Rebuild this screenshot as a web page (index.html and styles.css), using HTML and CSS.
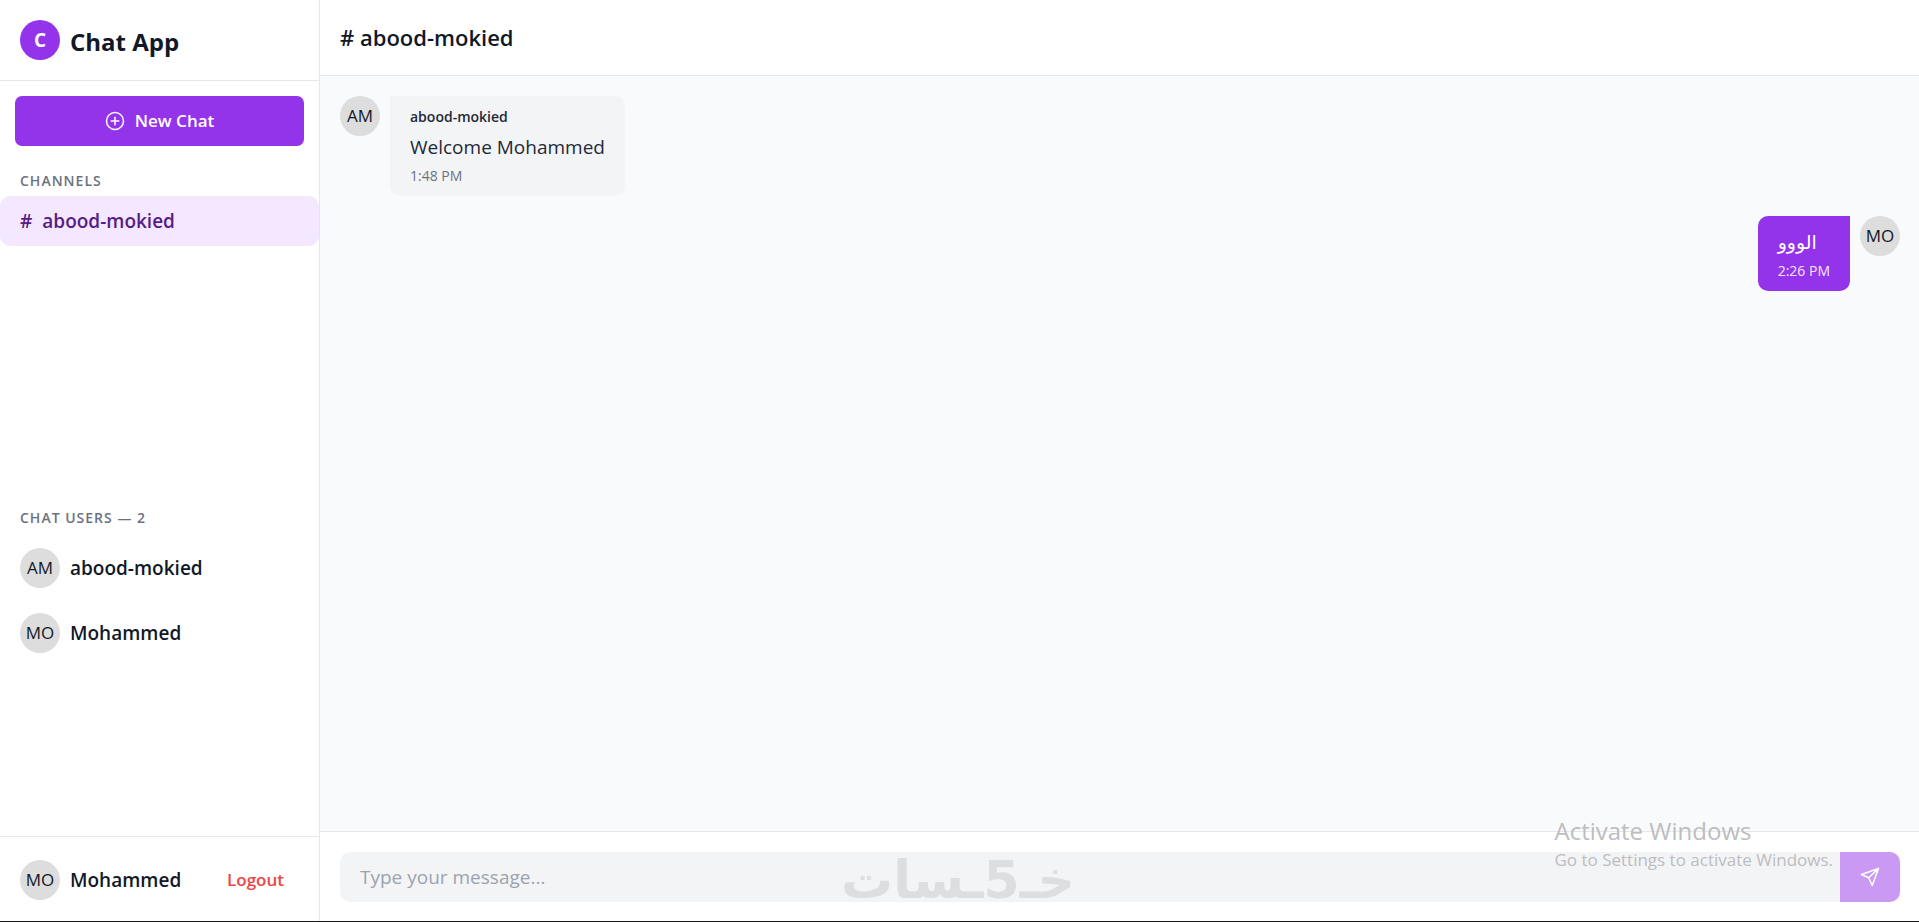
FILE: index.html
```
<!DOCTYPE html>
<html lang="en">
<head>
<meta charset="utf-8">
<title>Chat App</title>
<link rel="stylesheet" href="styles.css">
</head>
<body>
<div class="app">
  <aside class="sidebar">
    <header class="brand">
      <span class="brand-mark">C</span>
      <h1 class="brand-name">Chat App</h1>
    </header>
    <div class="sidebar-action">
      <button class="new-chat" type="button">
        <svg class="icon" viewBox="0 0 20 20" aria-hidden="true"><circle cx="10" cy="10" r="8.5"/><path d="M10 6.2v7.6M6.2 10h7.6"/></svg>
        New Chat
      </button>
    </div>
    <nav class="channels">
      <h2 class="section-title">Channels</h2>
      <a class="channel" href="#abood-mokied"><span>#</span><span>abood-mokied</span></a>
    </nav>
    <section class="users">
      <h2 class="section-title">Chat Users — 2</h2>
      <ul class="user-list">
        <li class="user"><span class="avatar">AM</span><span class="user-name">abood-mokied</span></li>
        <li class="user"><span class="avatar">MO</span><span class="user-name">Mohammed</span></li>
      </ul>
    </section>
    <footer class="account">
      <span class="avatar">MO</span>
      <span class="user-name">Mohammed</span>
      <button class="logout" type="button">Logout</button>
    </footer>
  </aside>
  <main class="chat">
    <header class="chat-header"><h2 class="chat-title"># abood-mokied</h2></header>
    <div class="messages">
      <article class="message">
        <span class="avatar">AM</span>
        <div class="bubble">
          <p class="author">abood-mokied</p>
          <p class="text">Welcome Mohammed</p>
          <time class="time">1:48 PM</time>
        </div>
      </article>
      <article class="message own">
        <span class="avatar">MO</span>
        <div class="bubble">
          <p class="text" lang="ar">الووو</p>
          <time class="time">2:26 PM</time>
        </div>
      </article>
    </div>
    <form class="composer">
      <input class="composer-input" type="text" placeholder="Type your message..." aria-label="Message">
      <button class="send" type="button" aria-label="Send">
        <svg class="icon" viewBox="0 0 20 20" aria-hidden="true"><path d="M18.5 1.5L1.5 7.5L8.7 10.8L12.2 18.5ZM18.5 1.5L8.7 10.8"/></svg>
      </button>
    </form>
  </main>
</div>
<div class="watermark" lang="ar" dir="rtl">خـ5ـسات</div>
<div class="activation">
  <p class="activation-title">Activate Windows</p>
  <p class="activation-note">Go to Settings to activate Windows.</p>
</div>
</body>
</html>
```
FILE: styles.css
```
* { box-sizing: border-box; }
body, h1, h2, p, ul { margin: 0; padding: 0; }
body {
  font-family: "Open Sans", "Noto Sans", "DejaVu Sans", sans-serif;
  font-size: 19px;
  line-height: 30px;
  color: #111827;
  background: #fff;
}
button, input { font: inherit; border: 0; }
button { cursor: pointer; }
.app {
  display: flex;
  height: 100vh;
  border-bottom: 1px solid #1c1c1c;
}
.icon {
  width: 20px;
  height: 20px;
  fill: none;
  stroke: currentColor;
  stroke-width: 1.5;
  stroke-linecap: round;
  stroke-linejoin: round;
}
.avatar, .brand-mark {
  display: flex;
  flex: none;
  align-items: center;
  justify-content: center;
  width: 40px;
  height: 40px;
  border-radius: 50%;
  background: #ddd;
  font-size: 17px;
}
.sidebar {
  display: flex;
  flex: none;
  flex-direction: column;
  width: 320px;
  border-right: 1px solid #e5e7eb;
}
.brand {
  display: flex;
  gap: 10px;
  padding: 20px 20px 16px;
  border-bottom: 1px solid #e5e7eb;
}
.brand-mark { background: #9333ea; color: #fff; font-size: 19px; font-weight: 700; }
.brand-name { font-size: 24px; line-height: 44px; font-weight: 700; }
.sidebar-action { padding: 15px; }
.new-chat {
  display: flex;
  align-items: center;
  justify-content: center;
  gap: 10px;
  width: 100%;
  height: 50px;
  border-radius: 7px;
  background: #9333ea;
  color: #fff;
  font-size: 17px;
  font-weight: 600;
}
.section-title {
  padding: 0 20px;
  font-size: 14px;
  line-height: 30px;
  font-weight: 600;
  letter-spacing: 1px;
  text-transform: uppercase;
  color: #6b7280;
}
.channels { flex: 1; padding-top: 5px; }
.channel {
  display: flex;
  gap: 10px;
  padding: 10px 20px;
  border-radius: 10px;
  background: #f3e8ff;
  color: #581c87;
  font-weight: 600;
  text-decoration: none;
}
.users { flex: 1; padding-top: 3px; }
.user-list { display: grid; gap: 25px; padding: 15px 20px; list-style: none; }
.user, .account { display: flex; align-items: center; gap: 10px; }
.user-name { font-weight: 600; }
.account { padding: 23px 20px 21px; border-top: 1px solid #e5e7eb; }
.logout {
  margin-left: auto;
  padding: 0 15px;
  background: none;
  color: #ef4444;
  font-size: 17px;
  font-weight: 600;
}
.chat { display: flex; flex: 1; flex-direction: column; min-width: 0; }
.chat-header { padding: 20px; border-bottom: 1px solid #e5e7eb; }
.chat-title { font-size: 22px; line-height: 35px; font-weight: 600; }
.messages {
  display: flex;
  flex: 1;
  flex-direction: column;
  gap: 20px;
  padding: 20px 19px 20px 20px;
  background: #f9fafb;
}
.message { display: flex; align-items: flex-start; gap: 10px; }
.own { flex-direction: row-reverse; }
.bubble {
  padding: 11px 20px 7px;
  border-radius: 0 10px 10px 10px;
  background: #f3f4f6;
}
.own .bubble { border-radius: 10px 0 10px 10px; background: #9333ea; color: #fff; }
.author { font-size: 14px; line-height: 20px; padding-bottom: 5px; font-weight: 600; color: #1f2937; }
.text { color: #1f2937; }
.own .text { color: #fff; }
.time { display: block; font-size: 14px; line-height: 27px; color: #6b7280; }
.own .time { color: #f3e8ff; }
.composer { display: flex; padding: 20px 19px 19px 20px; border-top: 1px solid #e5e7eb; }
.composer-input {
  flex: 1;
  min-width: 0;
  height: 50px;
  padding: 0 20px;
  border-radius: 10px 0 0 10px;
  background: #f3f4f6;
}
.composer-input::placeholder { color: #9ca3af; }
.send {
  display: flex;
  align-items: center;
  justify-content: center;
  width: 60px;
  height: 50px;
  border-radius: 0 10px 10px 0;
  background: #c999f4;
  color: #fff;
}
.watermark {
  position: absolute;
  right: 844px;
  bottom: 7px;
  font: 700 52px/70px "DejaVu Sans", sans-serif;
  color: #dddee0;
  pointer-events: none;
}
.activation {
  position: absolute;
  right: 86px;
  bottom: 50px;
  color: #bdbdbf;
  pointer-events: none;
}
.activation-title { font-size: 24px; line-height: 34px; }
.activation-note { font-size: 17px; line-height: 24px; }
```
